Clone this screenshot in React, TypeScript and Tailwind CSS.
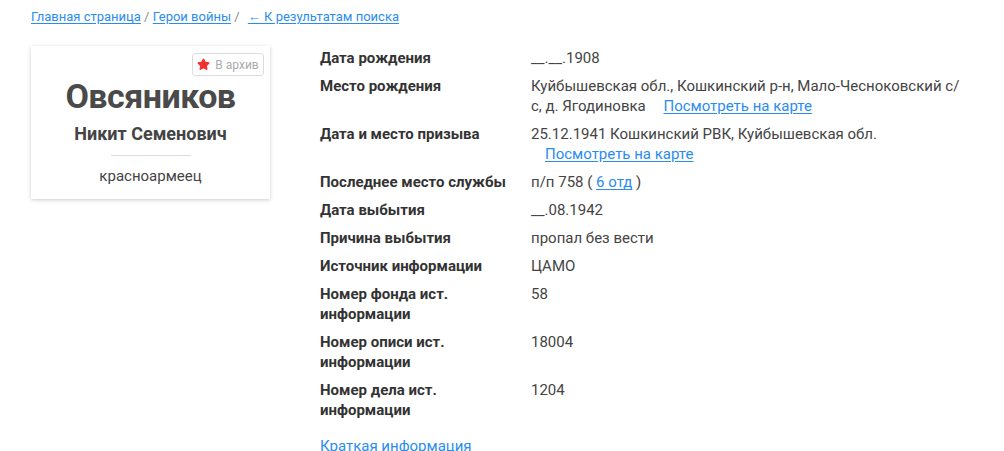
import { Star } from "lucide-react";

type Field = {
  label: string;
  value: React.ReactNode;
};

const link = "text-[#2b8cf0] underline underline-offset-2";

const fields: Field[] = [
  { label: "Дата рождения", value: "__.__.1908" },
  {
    label: "Место рождения",
    value: (
      <>
        Куйбышевская обл., Кошкинский р-н, Мало-Чесноковский с/с, д. Ягодиновка{" "}
        <a href="#" className={`${link} ml-[14px] inline-block`}>
          Посмотреть на карте
        </a>
      </>
    ),
  },
  {
    label: "Дата и место призыва",
    value: (
      <>
        25.12.1941 Кошкинский РВК, Куйбышевская обл.{" "}
        <a href="#" className={`${link} ml-[14px] inline-block`}>
          Посмотреть на карте
        </a>
      </>
    ),
  },
  {
    label: "Последнее место службы",
    value: (
      <>
        п/п 758 ({" "}
        <a href="#" className={link}>
          6 отд
        </a>{" "}
        )
      </>
    ),
  },
  { label: "Дата выбытия", value: "__.08.1942" },
  { label: "Причина выбытия", value: "пропал без вести" },
  { label: "Источник информации", value: "ЦАМО" },
  { label: "Номер фонда ист. информации", value: "58" },
  { label: "Номер описи ист. информации", value: "18004" },
  { label: "Номер дела ист. информации", value: "1204" },
];

export default function App() {
  return (
    <div className="min-h-screen bg-white px-[31px] pt-[7px] text-[#444] [font-family:Roboto,'Noto_Sans',sans-serif]">
      <nav className="text-[13px] leading-5 text-[#888]">
        <a href="#" className={link}>
          Главная страница
        </a>{" "}
        /{" "}
        <a href="#" className={link}>
          Герои войны
        </a>{" "}
        /{" "}
        <a href="#" className={`${link} ml-[5px]`}>
          ← К результатам поиска
        </a>
      </nav>

      <div className="mt-[19px] flex gap-[50px]">
        <div className="h-[153px] w-[239px] shrink-0 bg-white pt-[7px] pr-[6px] pl-3 shadow-[0_1px_4px_rgba(0,0,0,0.2)]">
          <div className="flex justify-end">
            <button
              type="button"
              className="flex h-[23px] w-[72px] items-center justify-center gap-[5px] rounded-[3px] border border-[#ddd] text-[12px] text-[#aaa]"
            >
              <Star size={13} fill="#f23030" stroke="#f23030" />
              В архив
            </button>
          </div>
          <h1 className="-mt-[2px] pr-[6px] text-center text-[34px] leading-[44px] font-bold tracking-[-0.5px] text-[#4a4a4a]">
            Овсяников
          </h1>
          <p className="mt-[4px] pr-[6px] text-center text-[18px] leading-6 font-bold text-[#444]">
            Никит Семенович
          </p>
          <div className="mx-auto mt-[9px] h-px w-[80px] -translate-x-[3px] bg-[#ddd]" />
          <p className="mt-[10px] pr-[6px] text-center text-[15px] leading-5">красноармеец</p>
        </div>

        <div className="w-[650px] pt-[2px] text-[15px] leading-5">
          <div className="flex flex-col gap-2">
            {fields.map((f) => (
              <div key={f.label} className="flex">
                <div className="w-[211px] shrink-0 pr-4 font-bold text-[#333]">{f.label}</div>
                <div className="w-[430px]">{f.value}</div>
              </div>
            ))}
          </div>
          <a href="#" className="mt-[16px] block text-[#2b8cf0]">
            Краткая информация
          </a>
        </div>
      </div>
    </div>
  );
}
